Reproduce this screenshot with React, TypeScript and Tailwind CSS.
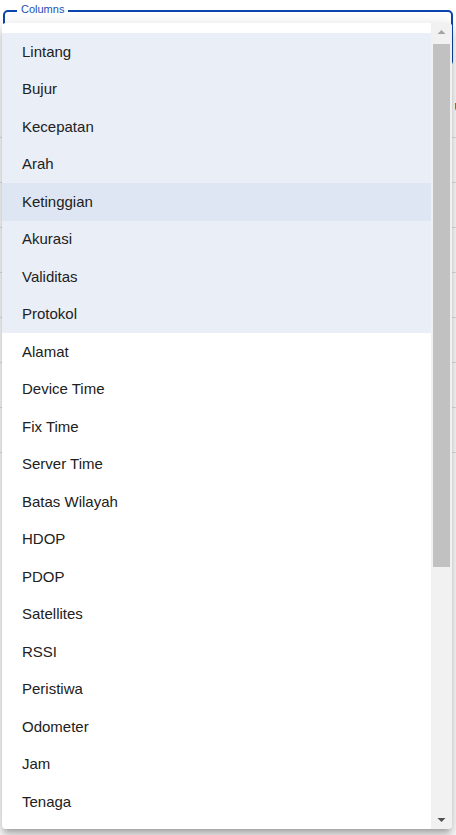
import React from "react";

const items = [
  "Lintang",
  "Bujur",
  "Kecepatan",
  "Arah",
  "Ketinggian",
  "Akurasi",
  "Validitas",
  "Protokol",
  "Alamat",
  "Device Time",
  "Fix Time",
  "Server Time",
  "Batas Wilayah",
  "HDOP",
  "PDOP",
  "Satellites",
  "RSSI",
  "Peristiwa",
  "Odometer",
  "Jam",
  "Tenaga",
];

const selected = new Set([0, 1, 2, 3, 4, 5, 6, 7]);

export default function App() {
  return (
    <div
      className="relative w-[456px] h-[835px] overflow-hidden bg-white"
      style={{ fontFamily: '"Liberation Sans", Arial, sans-serif' }}
    >
      {/* Background form field */}
      <div className="relative mx-[3px] mt-[10px] h-[56px] rounded-[5px] border-2 border-[#0b44ad]">
        <span className="absolute -top-[10px] left-[12px] bg-white px-[4px] text-[11px] leading-[14px] text-[#1d4fb6]">
          Columns
        </span>
      </div>

      {/* Background table */}
      <div className="mt-[17px] flex flex-col">
        <div className="flex h-[55px] items-center justify-end border-b border-[#e0e0e0] text-[14px] font-bold text-[#212121]">
          <span className="-mr-[7px] -mt-[8px]">u</span>
        </div>
        {[0, 1, 2, 3, 4, 5, 6].map((i) => (
          <div key={i} className="h-[45px] border-b border-[#e0e0e0]" />
        ))}
      </div>

      {/* Menu overlay */}
      <div className="absolute left-[2px] top-[23px] flex h-[806px] w-[450px] overflow-hidden rounded-[4px] bg-white shadow-[0px_5px_5px_-3px_rgba(0,0,0,0.2),0px_8px_10px_1px_rgba(0,0,0,0.14),0px_3px_14px_2px_rgba(0,0,0,0.12)]">
        <ul className="flex w-[429px] flex-col pt-[10px]">
          {items.map((label, i) => (
            <li
              key={label}
              className={
                "flex h-[37.5px] shrink-0 items-center pl-[20px] text-[15px] text-[#212121] " +
                (i === 4
                  ? "bg-[#dfe6f3]"
                  : selected.has(i)
                  ? "bg-[#e9eef7]"
                  : "bg-white")
              }
            >
              {label}
            </li>
          ))}
        </ul>
        {/* Scrollbar */}
        <div className="flex h-full w-[21px] flex-col items-center bg-[#f1f1f1]">
          <div className="flex h-[21px] w-full items-center justify-center pb-[3px]">
            <svg width="9" height="6" viewBox="0 0 9 6">
              <polygon points="0.5,5 4.5,1 8.5,5" fill="#a3a3a3" />
            </svg>
          </div>
          <div className="h-[523px] w-[17px] bg-[#c1c1c1]" />
          <div className="flex-1" />
          <div className="flex h-[21px] w-full items-center justify-center pt-[2px]">
            <svg width="9" height="6" viewBox="0 0 9 6">
              <polygon points="0.5,1 8.5,1 4.5,5" fill="#505050" />
            </svg>
          </div>
        </div>
      </div>
    </div>
  );
}
